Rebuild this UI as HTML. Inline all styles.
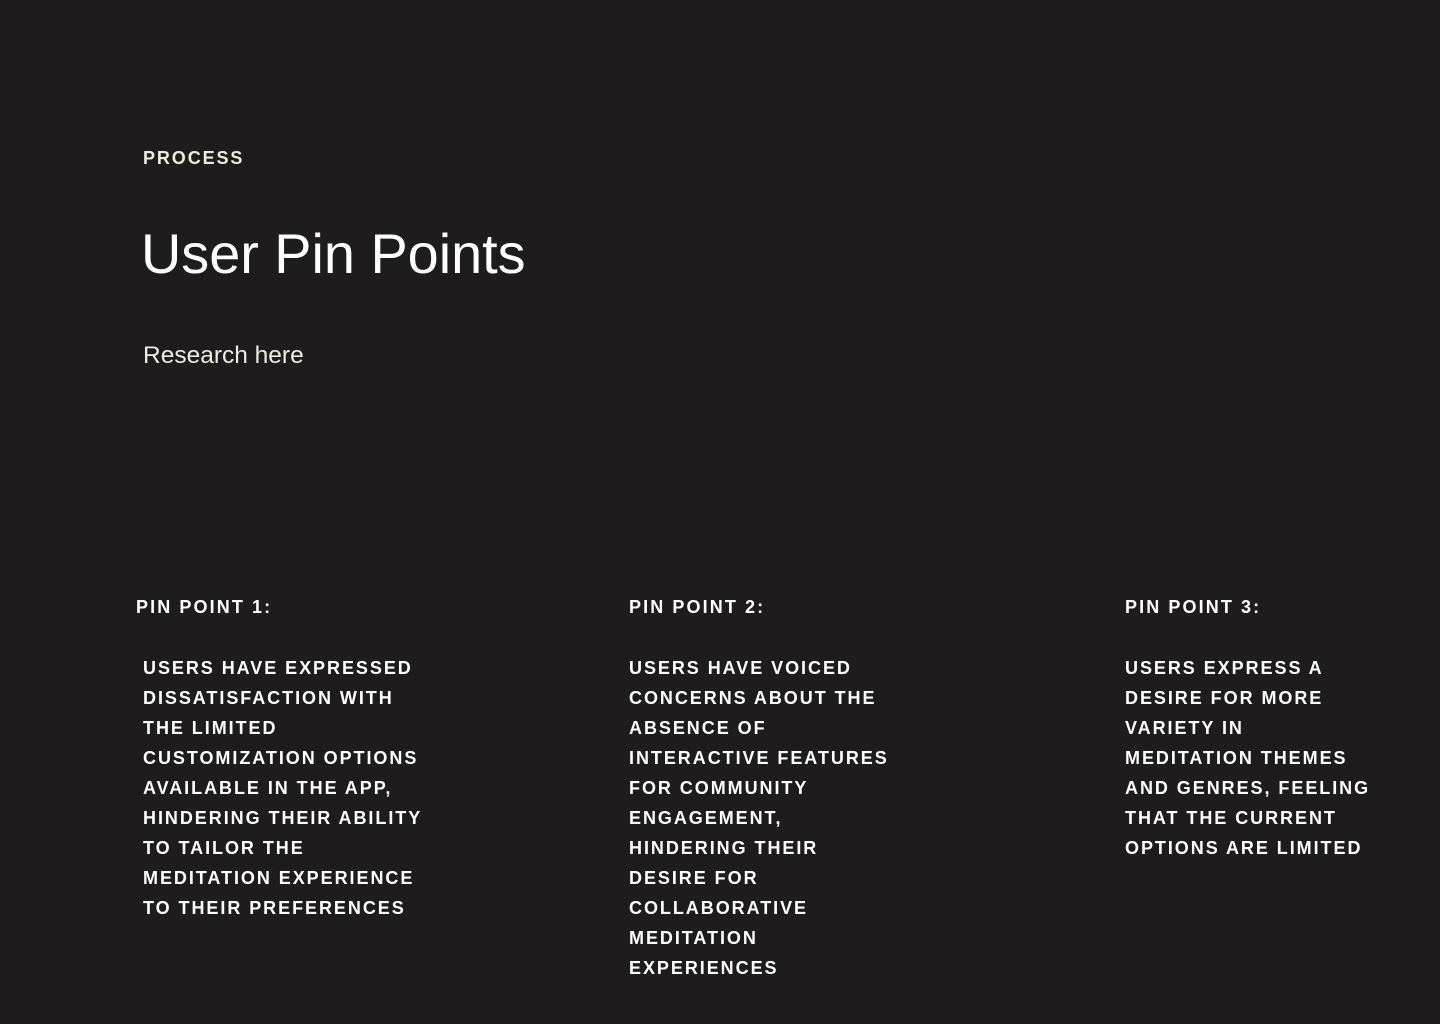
<!DOCTYPE html>
<html><head><meta charset="utf-8"><style>
html,body{margin:0;padding:0;width:1440px;height:1024px;background:#1e1c1d;overflow:hidden}
body{position:relative;font-family:"Liberation Sans",sans-serif}
.a{position:absolute;white-space:pre;margin:0}
.eb{font-weight:bold;font-size:18px;letter-spacing:1.9px;color:#f0ebdc;top:148px;left:143px}
h1{position:absolute;left:141px;top:216px;margin:0;font-weight:normal;font-size:55.8px;color:#fff;letter-spacing:0px;line-height:76px}
.r{top:342px;left:143px;font-size:24.5px;color:#f1ecdf}
.h{font-weight:bold;font-size:18px;letter-spacing:2.1px;color:#fff;top:596px;line-height:22px}
.b{font-weight:bold;font-size:18px;letter-spacing:1.95px;color:#fff;top:653px;line-height:30px}
</style></head><body>
<div class="a eb">PROCESS</div>
<h1>User Pin Points</h1>
<div class="a r">Research here</div>
<div class="a h" style="left:136px">PIN POINT 1:</div>
<div class="a h" style="left:629px">PIN POINT 2:</div>
<div class="a h" style="left:1125px">PIN POINT 3:</div>
<div class="a b" style="left:143px">USERS HAVE EXPRESSED
DISSATISFACTION WITH
THE LIMITED
CUSTOMIZATION OPTIONS
AVAILABLE IN THE APP,
HINDERING THEIR ABILITY
TO TAILOR THE
MEDITATION EXPERIENCE
TO THEIR PREFERENCES</div>
<div class="a b" style="left:629px">USERS HAVE VOICED
CONCERNS ABOUT THE
ABSENCE OF
INTERACTIVE FEATURES
FOR COMMUNITY
ENGAGEMENT,
HINDERING THEIR
DESIRE FOR
COLLABORATIVE
MEDITATION
EXPERIENCES</div>
<div class="a b" style="left:1125px">USERS EXPRESS A
DESIRE FOR MORE
VARIETY IN
MEDITATION THEMES
AND GENRES, FEELING
THAT THE CURRENT
OPTIONS ARE LIMITED</div>
</body></html>
